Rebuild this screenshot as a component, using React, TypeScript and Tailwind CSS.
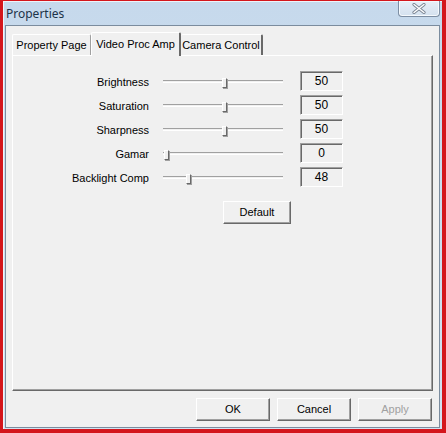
import React from "react";

const rows = [
  { label: "Brightness", value: "50", thumb: 59 },
  { label: "Saturation", value: "50", thumb: 59 },
  { label: "Sharpness", value: "50", thumb: 59 },
  { label: "Gamar", value: "0", thumb: 1 },
  { label: "Backlight Comp", value: "48", thumb: 23 },
];

const font = { fontFamily: '"Liberation Sans", Arial, sans-serif' };

function Slider({ thumb }: { thumb: number }) {
  return (
    <div className="relative w-[120px] h-[20px] flex items-center">
      <div className="w-full h-[3px] border-t border-[#a0a0a0] border-b border-b-white" />
      <div
        className="absolute top-[6px] w-[5px] h-[10px] bg-[#f0f0f0] border-t border-l border-white border-r border-b border-r-[#696969] border-b-[#696969] shadow-[1px_1px_0_#a0a0a0]"
        style={{ left: thumb }}
      />
    </div>
  );
}

function Button({ children, disabled, className }: { children: React.ReactNode; disabled?: boolean; className?: string }) {
  return (
    <button
      className={
        "h-[23px] bg-[#f0f0f0] border border-t-white border-l-white border-r-[#696969] border-b-[#696969] shadow-[inset_-1px_-1px_0_#a0a0a0] text-[11px] " +
        (disabled ? "text-[#a0a0a0] " : "text-black ") +
        (className ?? "")
      }
    >
      {children}
    </button>
  );
}

export default function App() {
  return (
    <div className="w-[446px] h-[433px] bg-[#d4161c] pl-[3px] pr-[4px] pt-px pb-[4px]" style={font}>
      <div className="h-full flex flex-col bg-gradient-to-b from-[#c6d9ec] to-[#d3e2f1] border-l border-t border-[#eef4fa]">
        {/* title bar */}
        <div className="h-[23px] flex items-start justify-between pl-[2px] pr-[2px]">
          <span
            className="text-[12px] text-[#1d3349] pt-[3px]"
            style={{ fontFamily: '"Noto Sans", "Open Sans", sans-serif' }}
          >
            Properties
          </span>
          <div className="w-[42px] h-[16px] -mt-px flex items-center justify-center rounded-b-[4px] border border-t-0 border-[#7d8ea3] bg-gradient-to-b from-[#e8eff7] to-[#d4e1ef] shadow-[inset_0_0_0_1px_#f5f9fd]">
            <svg width="14" height="11" viewBox="0 0 14 11">
              <path d="M2 1.5 L12 9.5 M12 1.5 L2 9.5" stroke="#7a8594" strokeWidth="3.2" strokeLinecap="round" />
              <path d="M2 1.5 L12 9.5 M12 1.5 L2 9.5" stroke="#ffffff" strokeWidth="1.4" strokeLinecap="round" />
            </svg>
          </div>
        </div>

        {/* client area */}
        <div className="flex-1 mx-[1px] mr-[2px] mb-[1px] border border-[#7b8c9e] bg-[#f0f0f0] flex flex-col pl-[6px] pr-[6px] pt-[6px]">
          {/* tabs */}
          <div className="flex items-end h-[23px] text-[11px] text-black">
            <div className="h-[21px] w-[79px] flex items-center justify-center border-t border-l border-white border-r border-r-[#a0a0a0] rounded-t-[2px] pt-[1px]">
              Property Page
            </div>
            <div className="relative -mb-px z-10 h-[24px] w-[90px] bg-[#f0f0f0] flex items-start justify-center pt-[3px] border-t border-l border-white border-r-2 border-r-[#696969] rounded-t-[2px]">
              Video Proc Amp
            </div>
            <div className="h-[21px] w-[82px] flex items-center justify-center border-t border-white border-r-2 border-r-[#696969] rounded-t-[2px] pt-[1px]">
              Camera Control
            </div>
          </div>

          {/* panel */}
          <div className="h-[336px] w-[421px] border-t border-l border-white border-r border-b border-r-[#696969] border-b-[#696969] shadow-[inset_-1px_-1px_0_#a0a0a0] flex flex-col pt-[14px] text-[11px] text-black">
            <div className="flex flex-col gap-[3px]">
              {rows.map((r) => (
                <div key={r.label} className="flex items-center h-[21px]">
                  <div className="w-[136px] text-right pt-[3px]">{r.label}</div>
                  <div className="ml-[14px] pt-[2px]">
                    <Slider thumb={r.thumb} />
                  </div>
                  <div className="ml-[17px] w-[43px] h-[20px] flex items-center justify-center border border-t-[#a0a0a0] border-l-[#a0a0a0] border-r-white border-b-white shadow-[inset_1px_1px_0_#696969] text-[12px]">
                    {r.value}
                  </div>
                </div>
              ))}
            </div>
            <div className="mt-[14px] pl-[210px]">
              <Button className="w-[68px] h-[21px]">Default</Button>
            </div>
          </div>

          {/* bottom buttons */}
          <div className="flex justify-end gap-[7px] mt-[7px] pr-[1px]">
            <Button className="w-[74px]">OK</Button>
            <Button className="w-[74px]">Cancel</Button>
            <Button className="w-[74px]" disabled>
              Apply
            </Button>
          </div>
        </div>
      </div>
    </div>
  );
}
